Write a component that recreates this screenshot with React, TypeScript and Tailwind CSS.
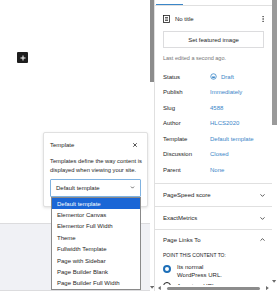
import { ChevronDown, ChevronUp, X, EllipsisVertical } from 'lucide-react';

const rows = [
  { label: 'Status', value: 'Draft', icon: true },
  { label: 'Publish', value: 'Immediately' },
  { label: 'Slug', value: '4588' },
  { label: 'Author', value: 'HLCS2020' },
  { label: 'Template', value: 'Default template' },
  { label: 'Discussion', value: 'Closed' },
  { label: 'Parent', value: 'None' },
];

const templates = [
  'Default template',
  'Elementor Canvas',
  'Elementor Full Width',
  'Theme',
  'Fullwidth Template',
  'Page with Sidebar',
  'Page Builder Blank',
  'Page Builder Full Width',
];

function DraftIcon() {
  return (
    <svg width="7" height="7" viewBox="0 0 14 14" className="shrink-0">
      <circle cx="7" cy="7" r="5.5" fill="none" stroke="#3a86c8" strokeWidth="1.6" />
      <path d="M3.5 7 A3.5 3.5 0 0 0 10.5 7 Z" fill="#3a86c8" />
    </svg>
  );
}

function PageIcon() {
  return (
    <svg width="7" height="8" viewBox="0 0 14 16" className="shrink-0">
      <rect x="1" y="1" width="12" height="14" fill="none" stroke="#1e1e1e" strokeWidth="1.6" />
      <path d="M4 5h6M4 8h6M4 11h6" stroke="#1e1e1e" strokeWidth="1.4" />
    </svg>
  );
}

function Tri({ dir }: { dir: 'down' | 'left' | 'right' }) {
  const d = dir === 'down' ? 'M0 0h6L3 4z' : dir === 'left' ? 'M4 0v6L0 3z' : 'M0 0v6l4-3z';
  const w = dir === 'down' ? 6 : 4;
  const h = dir === 'down' ? 4 : 6;
  return (
    <svg width={w * 0.7} height={h * 0.7} viewBox={`0 0 ${w} ${h}`} className="shrink-0">
      <path d={d} fill="#6b6b6b" />
    </svg>
  );
}

export default function App() {
  return (
    <div
      className="relative w-[277px] h-[300px] overflow-hidden bg-white text-[#1e1e1e] text-[6px] leading-none"
      style={{ fontFamily: '"Liberation Sans", Arial, sans-serif' }}
    >
      <div className="flex h-[291px]">
        {/* editor canvas */}
        <div className="w-[150px] flex flex-col">
          <div className="h-[223px] pt-[52px] pl-[17px]">
            <div className="w-[11px] h-[11px] bg-[#1e1e1e] rounded-[1px] flex items-center justify-center">
              <svg width="6" height="6" viewBox="0 0 6 6">
                <path d="M3 0.5v5M0.5 3h5" stroke="#fff" strokeWidth="1" />
              </svg>
            </div>
          </div>
          <div className="flex-1 bg-[#f0f1f5] border-t border-b border-[#dcdcde]"></div>
        </div>

        {/* canvas scrollbar */}
        <div className="w-[4px] flex flex-col">
          <div className="h-[82px] bg-[#8c8c8c]"></div>
          <div className="flex-1"></div>
          <div className="h-[6px] flex items-center justify-center pb-[1px]">
            <Tri dir="down" />
          </div>
        </div>

        {/* sidebar */}
        <div className="w-[118px] border-l border-[#e0e0e0] flex flex-col">
          <div className="flex-1 overflow-hidden">
            <div className="h-[6px] border-b border-[#e0e0e0] flex items-end">
              <div className="ml-[1px] w-[27px] h-[1.5px] bg-[#3a86c8]"></div>
            </div>

            <div className="px-[8px]">
              <div className="mt-[8px] h-[10px] flex items-center">
                <PageIcon />
                <span className="ml-[5px] font-medium">No title</span>
                <EllipsisVertical className="ml-auto -mr-[3px] w-[8px] h-[8px] text-[#555]" strokeWidth={2.5} />
              </div>

              <div className="mt-[7px] h-[17px] border border-[#dcdcde] flex items-center justify-center">
                Set featured image
              </div>

              <div className="mt-[7px] h-[8px] flex items-center text-[5.5px] text-[#757575]">
                Last edited a second ago.
              </div>

              <div className="mt-[6px] mb-[5.5px]">
                {rows.map((r) => (
                  <div key={r.label} className="h-[15.5px] flex items-center">
                    <span className="w-[47px] shrink-0">{r.label}</span>
                    {r.icon && (
                      <span className="mr-[4px] flex">
                        <DraftIcon />
                      </span>
                    )}
                    <span className="text-[#3a86c8]">{r.value}</span>
                  </div>
                ))}
              </div>
            </div>

            <div className="border-t border-[#e0e0e0] h-[23px] px-[8px] flex items-center">
              <span className="font-medium">PageSpeed score</span>
              <ChevronDown className="ml-auto -mr-[2px] w-[7px] h-[7px]" strokeWidth={2.5} />
            </div>
            <div className="border-t border-[#e0e0e0] h-[23px] px-[8px] flex items-center">
              <span className="font-medium">ExactMetrics</span>
              <ChevronDown className="ml-auto -mr-[2px] w-[7px] h-[7px]" strokeWidth={2.5} />
            </div>
            <div className="border-t border-[#e0e0e0] px-[8px]">
              <div className="h-[19px] flex items-center">
                <span className="font-medium">Page Links To</span>
                <ChevronUp className="ml-auto -mr-[2px] w-[7px] h-[7px]" strokeWidth={2.5} />
              </div>
              <div className="h-[13px] flex items-center text-[5px] uppercase">Point this content to:</div>
              <div className="flex items-start mt-[1px]">
                <span className="mt-[2px] w-[8px] h-[8px] rounded-full border-[2.2px] border-[#1d6fb8] bg-white shrink-0"></span>
                <span className="ml-[6px] leading-[8px]">
                  Its normal
                  <br />
                  WordPress URL.
                </span>
              </div>
              <div className="flex items-start mt-[3px] h-[4px] overflow-hidden">
                <span className="w-[8px] h-[8px] rounded-full border border-[#1e1e1e] shrink-0"></span>
                <span className="ml-[6px] leading-[8px]">A custom URL</span>
              </div>
            </div>
          </div>

          {/* horizontal scrollbar */}
          <div className="h-[6px] flex items-center pl-[3px] pr-[3px] bg-white">
            <Tri dir="left" />
            <div className="ml-[6px] w-[93px] h-[3px] rounded-full bg-[#8c8c8c]"></div>
            <div className="ml-auto flex">
              <Tri dir="right" />
            </div>
          </div>
        </div>

        {/* sidebar scrollbar */}
        <div className="w-[5px] flex flex-col">
          <div className="h-[125px] bg-[#9a9a9a]"></div>
          <div className="flex-1"></div>
          <div className="h-[13px] flex justify-center pt-[2px]">
            <Tri dir="down" />
          </div>
        </div>
      </div>

      {/* template popover */}
      <div className="absolute left-[43px] top-[132px] w-[105px] h-[75px] bg-white border border-[#e0e0e0] rounded-[2px] shadow-[0_1px_3px_rgba(0,0,0,0.12)] px-[6px]">
        <div className="h-[24px] flex items-center">
          <span className="font-medium">Template</span>
          <X className="ml-auto mr-[3px] w-[6px] h-[6px]" strokeWidth={3} />
        </div>
        <p className="leading-[9px] -mt-[0.5px] whitespace-nowrap text-[5.8px]">
          Templates define the way content is
          <br />
          displayed when viewing your site.
        </p>
        <div className="mt-[4px] h-[18px] border border-[#7fb2e0] rounded-[1px] flex items-center pl-[5px] pr-[5px]">
          <span>Default template</span>
          <ChevronDown className="ml-auto w-[5px] h-[5px]" strokeWidth={3} />
        </div>
      </div>

      {/* native select list */}
      <div className="absolute left-[51px] top-[197px] w-[90px] h-[93px] bg-white border border-[#8a8a8a]">
        {templates.map((t, i) => (
          <div
            key={t}
            className={
              i === 0
                ? 'h-[11.4px] flex items-center pl-[5px] bg-[#1a66d6] text-white'
                : 'h-[11.4px] flex items-center pl-[5px]'
            }
          >
            {t}
          </div>
        ))}
      </div>
    </div>
  );
}
